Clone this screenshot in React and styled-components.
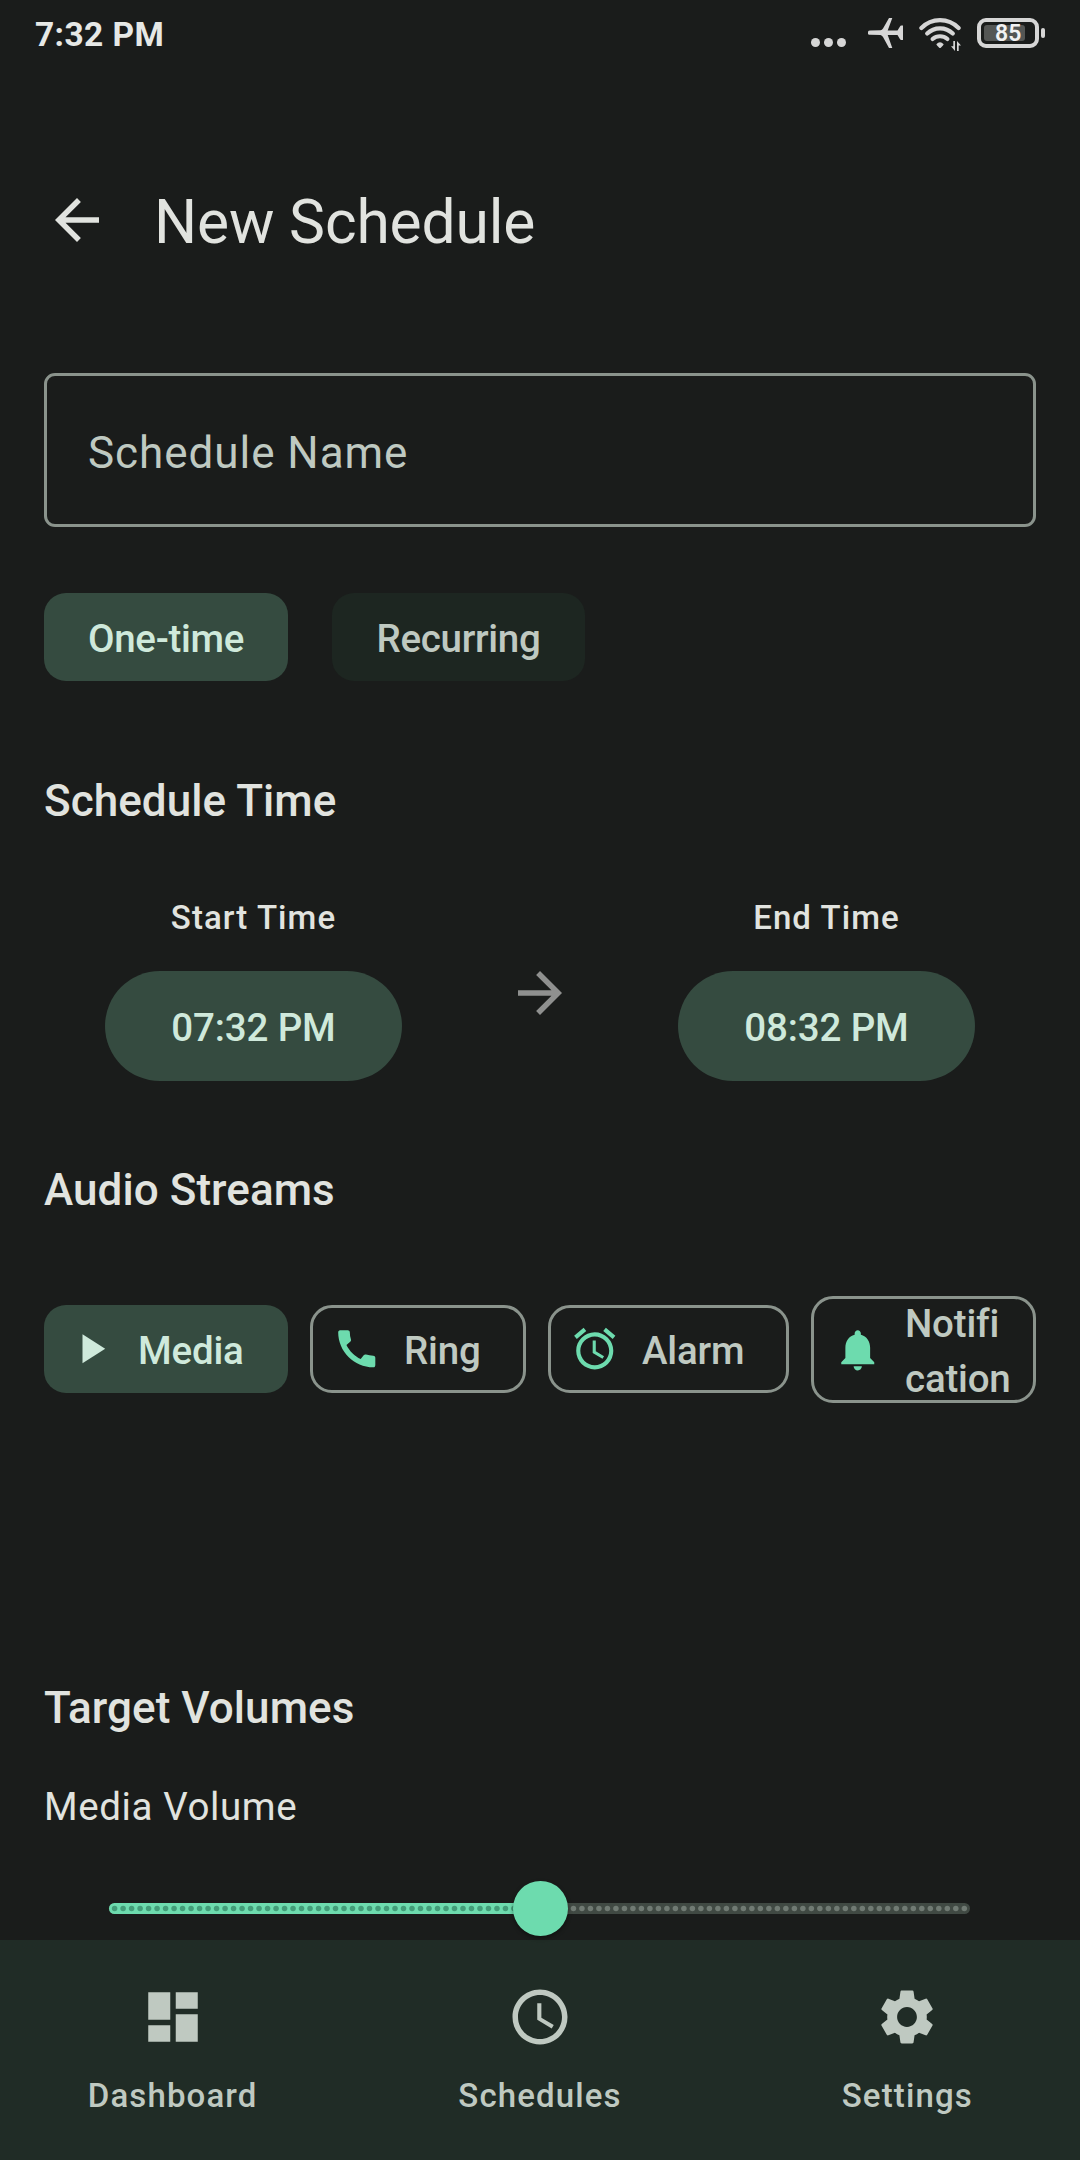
import React from 'react'
import { useState } from 'react';
import styled, { createGlobalStyle } from 'styled-components';
import {
  MdArrowBack,
  MdArrowForward,
  MdPlayArrow,
  MdCall,
  MdAlarm,
  MdNotifications,
  MdDashboard,
  MdAccessTime,
  MdSettings,
} from 'react-icons/md';

const GlobalStyle = createGlobalStyle`
  * { box-sizing: border-box; }
  body {
    margin: 0;
    background: #1a1c1b;
    font-family: Roboto, sans-serif;
    color: #e1e3df;
  }
  button {
    font-family: inherit;
    border: none;
    background: none;
    padding: 0;
    color: inherit;
  }
`

const Screen = styled.div`
  width: 1080px;
  height: 2160px;
  display: flex;
  flex-direction: column;
  overflow: hidden;
  background: #1a1c1b;
`

const StatusBar = styled.div`
  display: flex;
  justify-content: space-between;
  align-items: flex-start;
  height: 132px;
  padding: 18px 35px 0 35px;
  color: #d6d6d6;
`

const Clock = styled.div`
  font-size: 33.5px;
  font-weight: 700;
  line-height: 33px;
  letter-spacing: 0.4px;
  color: #e6e8e6;
`

const StatusIcons = styled.div`
  display: flex;
  align-items: flex-start;
`

const Dots = styled.svg`
  margin: 20px 22px 0 0;
`

const Plane = styled.svg`
  margin-right: 16px;
`

const Wifi = styled.svg`
  margin-right: 15px;
`

const Battery = styled.div`
  width: 62px;
  height: 30px;
  border: 4px solid #d6d6d6;
  border-radius: 9px;
  padding: 3px;
`

const BatteryLevel = styled.div`
  width: 41px;
  height: 16px;
  border-radius: 3px;
  background: #545654;
  color: #f2f2f2;
  font-size: 23px;
  font-weight: 600;
  line-height: 18px;
  padding-left: 11px;
`

const BatteryTip = styled.div`
  width: 4px;
  height: 10px;
  margin: 10px 0 0 2px;
  border-radius: 2px;
  background: #d6d6d6;
`

const Header = styled.header`
  display: flex;
  align-items: center;
  height: 176px;
  padding-left: 44px;
  margin-bottom: 65px;
`

const BackButton = styled.button`
  width: 66px;
  height: 66px;
  font-size: 66px;
  margin-right: 44px;
  line-height: 0;
`

const Title = styled.h1`
  margin: 0;
  padding-top: 4px;
  font-size: 60.5px;
  line-height: 77px;
  font-weight: 400;
  letter-spacing: -0.15px;
`

const Content = styled.main`
  flex: 1;
  min-height: 0;
  padding: 0 44px;
`

const NameInput = styled.input`
  display: block;
  width: 100%;
  height: 154px;
  padding: 5px 41px 0 41px;
  border: 3px solid #8a938c;
  border-radius: 11px;
  outline: none;
  background: transparent;
  color: #e1e3df;
  font-family: inherit;
  font-size: 44px;
  letter-spacing: 0.95px;
  &::placeholder {
    color: #bfc9c1;
    opacity: 1;
  }
`

const TypeRow = styled.div`
  display: flex;
  gap: 44px;
  margin-top: 66px;
`

const TypeChip = styled.button`
  width: ${(p) => p.$width}px;
  height: 88px;
  padding-top: 3px;
  border-radius: 22px;
  background: ${(p) => (p.$selected ? '#354b40' : '#1d2621')};
  color: ${(p) => (p.$selected ? '#cfe9db' : '#bfc9c1')};
  font-size: 38.5px;
  font-weight: 500;
  letter-spacing: -0.3px;
`

const SectionTitle = styled.h2`
  margin: ${(p) => p.$top}px 0 0 0;
  font-size: 44px;
  line-height: 66px;
  font-weight: 500;
  letter-spacing: 0.06px;
`

const TimeRow = styled.div`
  display: flex;
  align-items: center;
  height: 186px;
  margin-top: 61px;
`

const TimeColumn = styled.div`
  flex: 1;
  display: flex;
  flex-direction: column;
  align-items: center;
`

const TimeLabel = styled.div`
  font-size: 33px;
  line-height: 44px;
  font-weight: 500;
  letter-spacing: 1.07px;
  padding-top: 1px;
  margin-bottom: 31px;
`

const TimeButton = styled.button`
  width: 297px;
  height: 110px;
  padding-top: 3px;
  border-radius: 55px;
  background: #354b40;
  color: #cfe9db;
  font-size: 38.5px;
  font-weight: 500;
  letter-spacing: -0.15px;
`

const ArrowBox = styled.div`
  display: flex;
  margin: 10px 44px 0 44px;
  font-size: 66px;
  color: #8f908f;
`

const StreamRow = styled.div`
  display: flex;
  align-items: flex-start;
  gap: 22px;
  height: 107px;
  margin-top: 73px;
`

const StreamChip = styled.button`
  display: flex;
  align-items: center;
  width: ${(p) => p.$width}px;
  height: ${(p) => (p.$tall ? 107 : 88)}px;
  margin-top: ${(p) => (p.$tall ? 0 : 9)}px;
  padding-left: ${(p) => (p.$selected ? 22 : 19)}px;
  border: ${(p) => (p.$selected ? 'none' : '3px solid #8a938c')};
  border-radius: 22px;
  background: ${(p) => (p.$selected ? '#354b40' : 'transparent')};
  color: ${(p) => (p.$selected ? '#cfe9db' : '#bfc9c1')};
  svg {
    flex: none;
    width: 49.5px;
    height: 49.5px;
    color: ${(p) => (p.$selected ? '#cfe9db' : '#6ddbae')};
  }
`

const StreamLabel = styled.span`
  margin: 3px 0 0 22.5px;
  font-size: 38.5px;
  line-height: 55px;
  font-weight: 500;
  letter-spacing: -0.2px;
  font-variant-ligatures: common-ligatures;
  text-align: left;
`

const VolumeLabel = styled.div`
  margin-top: 38px;
  font-size: 38.5px;
  line-height: 55px;
  letter-spacing: 0.6px;
`

const SliderRow = styled.div`
  display: flex;
  align-items: center;
  height: 55px;
  margin: 47px 66px 0 65px;
`

const Track = styled.div`
  position: relative;
  width: 861px;
  height: 11px;
  border-radius: 6px;
  background: #404943;
`

const TrackFill = styled.div`
  height: 11px;
  border-radius: 6px 0 0 6px;
  background: #6ddbae;
`

const Ticks = styled.svg`
  position: absolute;
  left: 0;
  top: 0;
`

const Thumb = styled.div`
  position: absolute;
  top: -22px;
  width: 55px;
  height: 55px;
  margin-left: -27px;
  border-radius: 50%;
  background: #6ddbae;
  box-shadow: 0 2px 4px rgba(0, 0, 0, 0.4);
`

const NavBar = styled.nav`
  display: flex;
  gap: 22px;
  height: 220px;
  background: #202c26;
`

const NavItem = styled.button`
  flex: 1;
  display: flex;
  flex-direction: column;
  align-items: center;
  padding-top: 44px;
  color: #bfc9c1;
  font-size: 33px;
  line-height: 44px;
  font-weight: 500;
  letter-spacing: 1.13px;
  svg {
    width: 66px;
    height: 66px;
    margin-bottom: 24px;
  }
`

const streams = [
  { name: 'Media', icon: MdPlayArrow, width: 244 },
  { name: 'Ring', icon: MdCall, width: 216 },
  { name: 'Alarm', icon: MdAlarm, width: 241 },
  { name: 'Notification', lines: ['Notifi', 'cation'], icon: MdNotifications, width: 225 },
]

const tabs = [
  { name: 'Dashboard', icon: MdDashboard },
  { name: 'Schedules', icon: MdAccessTime },
  { name: 'Settings', icon: MdSettings },
]

function VolumeSlider({ value }) {
  const ticks = Array.from({ length: 101 }, (_, i) => i);
  return (
    <SliderRow>
      <Track>
        <TrackFill style={{ width: `${value}%` }} />
        <Ticks width="861" height="11">
          {ticks.map((i) => (
            <circle key={i} cx={5.6 + i * 8.497} cy="5.5" r="2.75" fill={i <= value ? '#439d79' : '#707a73'} />
          ))}
        </Ticks>
        <Thumb style={{ left: `${value}%` }} />
      </Track>
    </SliderRow>
  )
}

function PhoneStatus() {
  return (
    <StatusBar>
      <Clock>7:32 PM</Clock>
      <StatusIcons>
        <Dots width="35" height="9" fill="currentColor">
          <circle cx="4.5" cy="4.5" r="4.5" />
          <circle cx="17.5" cy="4.5" r="4.5" />
          <circle cx="30.5" cy="4.5" r="4.5" />
        </Dots>
        <Plane width="35" height="30" fill="currentColor">
          <path d="M2 12.5 L12.5 12.3 Q14 12 15 10.4 L21 0 H24.3 L19.7 12.5 H29.5 L32 8.5 Q32.4 7.6 33.4 7.6 H35 V22 H33.4 Q32.4 22 32 21.2 L29.5 17 H19.7 L24.3 30 H21 L15 19 Q14 17.4 12.5 17.1 L2 16.8 A2.15 2.15 0 0 1 2 12.5 Z" />
        </Plane>
        <Wifi width="43" height="34" fill="none" stroke="currentColor" strokeWidth="4.2" strokeLinecap="round">
          <path d="M2.4 10 A25.9 25.9 0 0 1 39.6 10" />
          <path d="M8.2 15.6 A18.1 18.1 0 0 1 33.8 15.6" />
          <path d="M13.6 21 A11.4 11.4 0 0 1 28.4 21" />
          <path d="M17.3 26.3 Q21 22.4 24.7 26.3 Q24.6 27.2 21.8 29.7 Q21 30.3 20.2 29.7 Q17.4 27.2 17.3 26.3 Z" fill="currentColor" stroke="none" />
          <path d="M34.3 23 H36 V33 L32 28.3 H34.3 Z M38 33 H39.7 V27.5 H42 L38 23 Z" fill="currentColor" stroke="none" />
        </Wifi>
        <Battery>
          <BatteryLevel>85</BatteryLevel>
        </Battery>
        <BatteryTip />
      </StatusIcons>
    </StatusBar>
  )
}

function App() {
  const [name, setName] = useState('');
  const [type, setType] = useState('One-time');
  const [stream, setStream] = useState('Media');

  return (
    <>
      <GlobalStyle />
      <Screen>
        <PhoneStatus />
        <Header>
          <BackButton aria-label="Back"><MdArrowBack /></BackButton>
          <Title>New Schedule</Title>
        </Header>

        <Content>
          <NameInput placeholder="Schedule Name" value={name} onChange={(e) => setName(e.target.value)} />
          <TypeRow>
            <TypeChip $width={244} $selected={type === 'One-time'} onClick={() => setType('One-time')}>One-time</TypeChip>
            <TypeChip $width={253} $selected={type === 'Recurring'} onClick={() => setType('Recurring')}>Recurring</TypeChip>
          </TypeRow>

          <SectionTitle $top={87}>Schedule Time</SectionTitle>
          <TimeRow>
            <TimeColumn>
              <TimeLabel>Start Time</TimeLabel>
              <TimeButton>07:32 PM</TimeButton>
            </TimeColumn>
            <ArrowBox><MdArrowForward /></ArrowBox>
            <TimeColumn>
              <TimeLabel>End Time</TimeLabel>
              <TimeButton>08:32 PM</TimeButton>
            </TimeColumn>
          </TimeRow>

          <SectionTitle $top={76}>Audio Streams</SectionTitle>
          <StreamRow>
            {streams.map(({ name, lines, icon: Icon, width }) => (
              <StreamChip key={name} $width={width} $tall={!!lines} $selected={stream === name} onClick={() => setStream(name)}>
                <Icon />
                <StreamLabel>{lines ? <>{lines[0]}<br />{lines[1]}</> : name}</StreamLabel>
              </StreamChip>
            ))}
          </StreamRow>

          <SectionTitle $top={272}>Target Volumes</SectionTitle>
          <VolumeLabel>Media Volume</VolumeLabel>
          <VolumeSlider value={50} />
        </Content>

        <NavBar>
          {tabs.map(({ name, icon: Icon }) => (
            <NavItem key={name}>
              <Icon />
              {name}
            </NavItem>
          ))}
        </NavBar>
      </Screen>
    </>
  )
}

export default App
